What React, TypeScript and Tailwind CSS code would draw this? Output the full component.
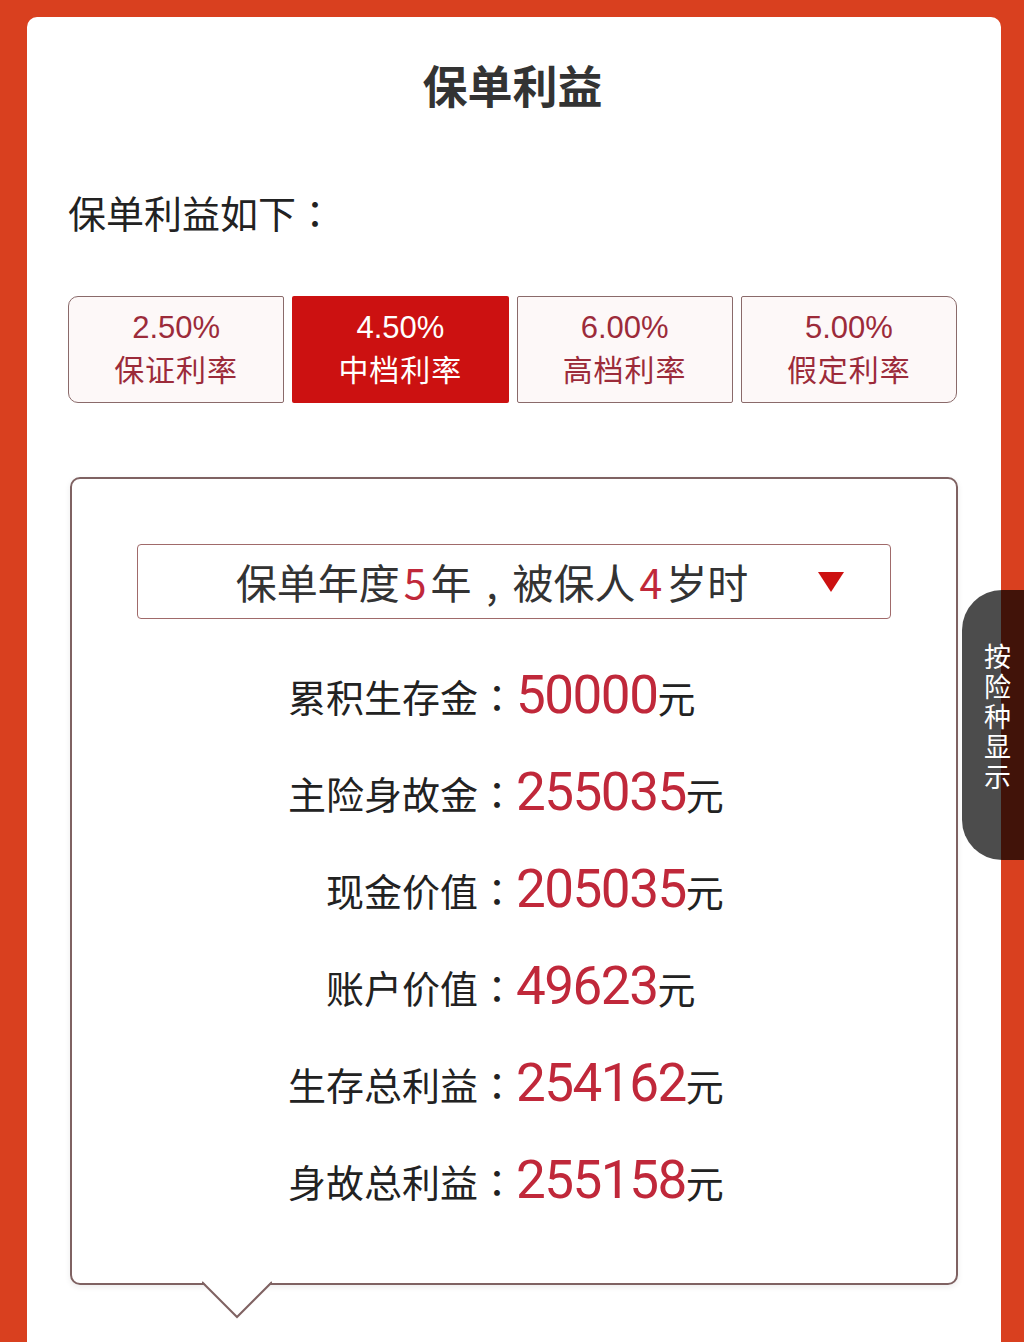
import React from 'react';

const tabs = [
  { rate: '2.50%', name: '保证利率' },
  { rate: '4.50%', name: '中档利率' },
  { rate: '6.00%', name: '高档利率' },
  { rate: '5.00%', name: '假定利率' },
];

const rows = [
  { label: '累积生存金', value: '50000' },
  { label: '主险身故金', value: '255035' },
  { label: '现金价值', value: '205035' },
  { label: '账户价值', value: '49623' },
  { label: '生存总利益', value: '254162' },
  { label: '身故总利益', value: '255158' },
];

// centred full-width colon, as in the screenshot
const Colon: React.FC = () => <span className="font-['Noto_Sans_CJK_TC',sans-serif]">：</span>;

const App: React.FC = () => {
  const active = 1;

  return (
    <div className="relative min-h-[1342px] overflow-hidden bg-[#d9401f] pt-[17px] pl-[27px] pr-[23px] font-['Noto_Sans_CJK_SC',sans-serif]">
      <div className="min-h-[1325px] rounded-t-[10px] bg-white pl-[41px] pr-[44px] pt-[40px]">
        <h1 className="text-center text-[45px] font-bold leading-[56px] text-[#333]">保单利益</h1>

        <p className="mt-[74px] text-[38px] leading-[50px] text-[#222]">
          保单利益如下<Colon />
        </p>

        {/* rate tabs */}
        <div className="mt-[59px] grid grid-cols-4 gap-[8px]">
          {tabs.map((tab, i) => {
            const isActive = i === active;
            const radius = i === 0 ? 'rounded-l-[10px] rounded-r-[2px]' : i === tabs.length - 1 ? 'rounded-r-[10px] rounded-l-[2px]' : 'rounded-[2px]';
            return (
              <div
                key={i}
                className={`flex h-[107px] flex-col items-center justify-center pb-[4px] ${radius} ${
                  isActive ? 'bg-[#cc1111] text-white' : 'border-[1.5px] border-[#8a6a6a] bg-[#fdf8f8] text-[#9c2b3a]'
                }`}
              >
                <span className="font-['Liberation_Sans',sans-serif] text-[31px] leading-[40px]">{tab.rate}</span>
                <span className="text-[30px] leading-[40px] tracking-[1px]">{tab.name}</span>
              </div>
            );
          })}
        </div>

        {/* benefit box */}
        <div className="relative ml-[2px] mr-[-1px] mt-[74px] rounded-[10px] border-2 border-[#7f6262] pb-[54px] shadow-[0_2px_6px_rgba(0,0,0,0.08)]">
          <div className="mx-[65px] mt-[65px] flex h-[75px] items-center rounded-[4px] border-[1.5px] border-[#a06a6a] pl-[28px]">
            <div className="flex-1 text-center text-[41px] leading-none text-[#333]">
              保单年度<span className="mx-[4px] text-[#c0283a]">5</span>年<span className="inline-block w-[41px] text-center">,</span>被保人<span className="mx-[4px] text-[#c0283a]">4</span>岁时
            </div>
            <svg width="26" height="20" viewBox="0 0 26 20" className="mr-[46px]">
              <polygon points="0,0 26,0 13,20" fill="#cc1111" />
            </svg>
          </div>

          <div className="mt-[28px] grid grid-cols-[444px_1fr]">
            {rows.map((row, i) => (
              <React.Fragment key={i}>
                <div className="flex h-[97px] items-center justify-end text-[38px] text-[#222]">
                  {row.label}
                  <Colon />
                </div>
                <div className="flex h-[97px] items-center">
                  <span className="flex items-baseline">
                    <span className="font-['Roboto',sans-serif] text-[53px] tracking-[-1.5px] text-[#c0283a]">{row.value}</span>
                    <span className="text-[38px] text-[#222]">元</span>
                  </span>
                </div>
              </React.Fragment>
            ))}
          </div>

          <svg width="70" height="38" viewBox="0 0 70 38" className="absolute left-[130px] top-full -mt-[2px]">
            <polygon points="0,0 35,36 70,0" fill="#ffffff" />
            <polyline points="0,1 35,36 70,1" fill="none" stroke="#7f6262" strokeWidth="2" />
          </svg>
        </div>
      </div>

      {/* side tab */}
      <div className="absolute right-0 top-[590px] flex h-[270px] w-[62px] items-center justify-center rounded-l-[40px] bg-black/70 pb-[14px] pl-[8px] text-white">
        <span className="text-[27px] leading-[34px] tracking-[3px] [writing-mode:vertical-rl]">按险种显示</span>
      </div>
    </div>
  );
};

export default App;
